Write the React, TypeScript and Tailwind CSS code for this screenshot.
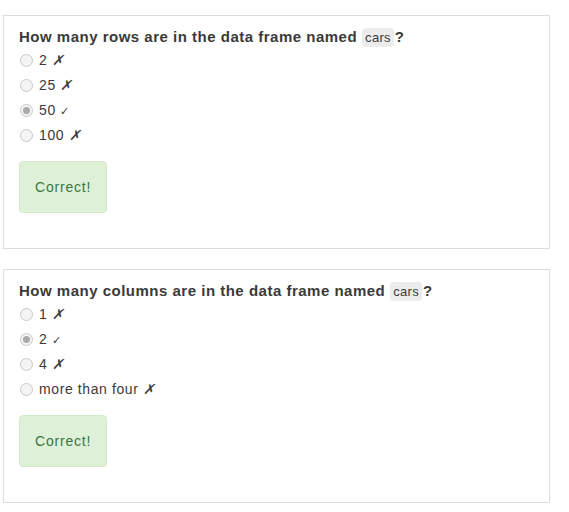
const questions = [
  {
    title: "How many rows are in the data frame named",
    options: [
      { label: "2", ok: false },
      { label: "25", ok: false },
      { label: "50", ok: true },
      { label: "100", ok: false },
    ],
  },
  {
    title: "How many columns are in the data frame named",
    options: [
      { label: "1", ok: false },
      { label: "2", ok: true },
      { label: "4", ok: false },
      { label: "more than four", ok: false },
    ],
  },
];

function Radio({ checked }: { checked: boolean }) {
  return (
    <span className="w-[13px] h-[13px] rounded-full border border-[#c8c8c8] bg-[#f4f4f4] flex items-center justify-center shrink-0">
      {checked && <span className="w-[7px] h-[7px] rounded-full bg-[#a9a9a9]" />}
    </span>
  );
}

export default function App() {
  return (
    <div className="bg-white min-h-[512px] pt-[15px] pl-[3px] w-[550px] flex flex-col gap-[20px] font-['Liberation_Sans',Arial,sans-serif] text-[#333]">
      {questions.map(q => (
        <div key={q.title} className="border border-[#dddddd] h-[234px] px-[15px] pt-[10px]">
          <h3 className="text-[15px] font-bold leading-[22px] flex items-center text-[#3a3a3a] tracking-[0.5px]">
            {q.title}
            <code className="ml-[5px] bg-[#ececec] rounded-[4px] px-[3px] text-[13px] font-normal leading-[19px] tracking-[0.3px] font-['Liberation_Sans',Arial,sans-serif]">cars</code>
            <span className="ml-[1px]">?</span>
          </h3>
          <div className="flex flex-col">
            {q.options.map(o => (
              <label key={o.label} className="flex items-center gap-[6px] h-[25px] pl-[1px] text-[14px] text-[#3a3a3a] tracking-[0.6px]">
                <Radio checked={o.ok} />
                <span>
                  {o.label}{" "}
                  {o.ok ? <span className="text-[11px]">✓</span> : <span className="italic">✗</span>}
                </span>
              </label>
            ))}
          </div>
          <div className="mt-[13px] inline-block bg-[#dff0d8] border border-[#d6e9c6] rounded-[4px] px-[15px] py-[15px] text-[#3c763d] text-[14px] leading-[20px] tracking-[0.8px]">
            Correct!
          </div>
        </div>
      ))}
    </div>
  );
}
